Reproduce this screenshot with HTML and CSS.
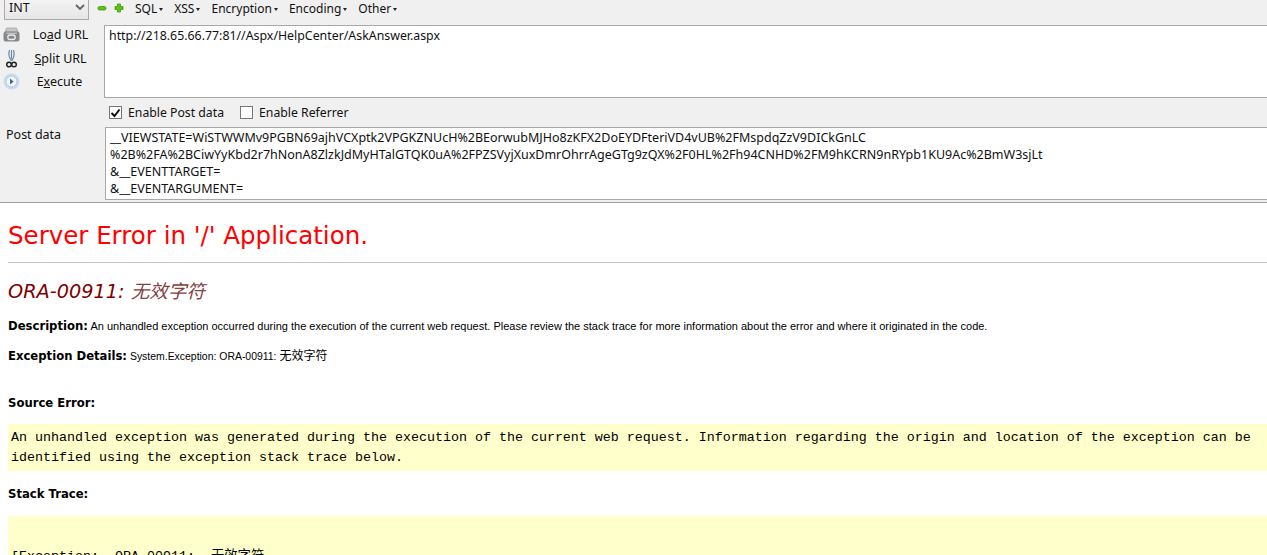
FILE: index.html
```html
<!DOCTYPE html>
<html lang="en">
<head>
<meta charset="utf-8">
<title>Server Error</title>
<link rel="stylesheet" href="styles.css">
</head>
<body>
<section class="bar">
  <div class="toolbar">
    <div class="select"><span>INT</span><svg class="chev" width="10" height="7" viewBox="0 0 10 7"><path d="M1 1l4 4 4-4" fill="none" stroke="#666" stroke-width="1.800"/></svg></div>
    <svg class="pm minus" width="10" height="10" viewBox="0 0 10 10"><rect x="1" y="3.500" width="8" height="3.500" rx="1.500" fill="#62c010" stroke="#3f9a0c" stroke-width=".8"/></svg>
    <svg class="pm" width="10" height="10" viewBox="0 0 10 10"><path d="M3.500 1h3v2.500H9v3H6.500V9h-3V6.500H1v-3h2.500z" fill="#62c010" stroke="#3f9a0c" stroke-width=".8"/></svg>
    <nav class="menu">
      <span class="mi">SQL</span><span class="mi">XSS</span><span class="mi">Encryption</span><span class="mi">Encoding</span><span class="mi">Other</span>
    </nav>
  </div>
  <div class="url-row">
    <div class="actions">
      <div class="action">
        <svg class="ic" width="17" height="15" viewBox="0 0 17 15"><path d="M3.500 1h10l1.500 4H2z" fill="#c4c6c8" stroke="#a0a2a4" stroke-width=".7"/><rect x=".5" y="4.500" width="16" height="10" rx="2.500" fill="#85888b"/><path d="M3 6.200h11" stroke="#d5d7d8"/><rect x="4.800" y="8" width="7.400" height="4.500" rx="2.200" fill="none" stroke="#eceded" stroke-width="1.300"/></svg>
        <span class="label">Lo<u>a</u>d URL</span>
      </div>
      <div class="action">
        <svg class="ic" width="17" height="19" viewBox="0 0 17 19"><path d="M6.500 1C5.500 4 5.500 8 8.500 12M10.500 1c1 3 1 7-2 11M8.500 1v9" fill="none" stroke="#6f8aa8" stroke-width="1.200"/><circle cx="6" cy="15.500" r="2.300" fill="none" stroke="#222" stroke-width="1.500"/><circle cx="11" cy="15.500" r="2.300" fill="none" stroke="#222" stroke-width="1.500"/></svg>
        <span class="label"><u>S</u>plit URL</span>
      </div>
      <div class="action">
        <svg class="ic" width="17" height="17" viewBox="0 0 17 17"><circle cx="8.500" cy="8.500" r="8" fill="#c8dbf0"/><circle cx="8.500" cy="8.500" r="5.400" fill="#f5f8fd" stroke="#9dbde0" stroke-width=".7"/><path d="M7 5.500l3.700 3-3.700 3z" fill="#2f6cb5"/></svg>
        <span class="label lb-exec">E<u>x</u>ecute</span>
      </div>
    </div>
    <div class="box url-box">http://218.65.66.77:81//Aspx/HelpCenter/AskAnswer.aspx</div>
  </div>
  <div class="checks">
    <label class="check"><span class="cb"><svg width="11" height="10" viewBox="0 0 11 10"><path d="M1.500 5l3 3L9.500 1.500" fill="none" stroke="#111" stroke-width="2"/></svg></span>Enable Post data</label>
    <label class="check"><span class="cb"></span>Enable Referrer</label>
  </div>
  <div class="post-row">
    <div class="post-label">Post data</div>
    <div class="box post-box">__VIEWSTATE=WiSTWWMv9PGBN69ajhVCXptk2VPGKZNUcH%2BEorwubMJHo8zKFX2DoEYDFteriVD4vUB%2FMspdqZzV9DICkGnLC<br>%2B%2FA%2BCiwYyKbd2r7hNonA8ZlzkJdMyHTalGTQK0uA%2FPZSVyjXuxDmrOhrrAgeGTg9zQX%2F0HL%2Fh94CNHD%2FM9hKCRN9nRYpb1KU9Ac%2BmW3sjLt<br>&amp;__EVENTTARGET=<br>&amp;__EVENTARGUMENT=</div>
  </div>
</section>
<main class="page">
  <h1>Server Error in '/' Application.</h1>
  <hr>
  <h2>ORA-00911: <span class="cjk">无效字符</span></h2>
  <p class="desc"><b>Description:</b> An unhandled exception occurred during the execution of the current web request. Please review the stack trace for more information about the error and where it originated in the code.</p>
  <p class="details"><b>Exception Details:</b> System.Exception: ORA-00911: <span class="cjk-up">无效字符</span></p>
  <p class="src"><b>Source Error:</b></p>
  <div class="code">An unhandled exception was generated during the execution of the current web request. Information regarding the origin and location of the exception can be identified using the exception stack trace below.</div>
  <p class="stack"><b>Stack Trace:</b></p>
  <div class="code trace">[Exception:  ORA-00911:  <span class="cjk-mono">无效字符</span></div>
</main>
</body>
</html>
```
FILE: styles.css
```css
html, body { margin: 0; padding: 0; height: 555px; overflow: hidden; background: #fff; }
body { font-family: "Liberation Sans", Arial, sans-serif; color: #000; }
.bar { height: 202px; background: #f0f0f0; border-bottom: 1px solid #a0a0a0; font-family: "Noto Sans", "Open Sans", sans-serif; font-size: 12.500px; color: #111; overflow: hidden; }
.toolbar { display: flex; align-items: center; height: 16px; padding: 0 0 4px 4px; }
.select { width: 85px; height: 21px; margin: -1px 0 -4px; border: 1px solid #aaa; border-top: 0; box-sizing: border-box; display: flex; justify-content: space-between; padding: 0 3px 3px 4px; background: linear-gradient(#f4f4f4, #e6e6e6); align-items: center; }
.pm.minus { margin-left: 8px; }
.pm + .pm { margin-left: 7px; }
.menu { display: flex; margin-left: 11px; gap: 11px; font-size: 12px; }
.mi::after { content: ""; display: inline-block; margin-left: 2px; vertical-align: 2px; border: 2px solid transparent; border-top: 3px solid #222; border-bottom: 0; }
.url-row { display: flex; margin-top: 5px; }
.actions { width: 104px; flex: none; margin-top: -2px; }
.action { display: flex; align-items: center; height: 23.500px; padding-left: 3px; }
.ic { flex: none; }
.label { flex: 1; text-align: center; padding-right: 3px; }
.lb-exec { padding-right: 5px; }
.box { background: #fff; border: 1px solid #a8a8a8; border-right: 0; box-sizing: border-box; flex: 1; }
.url-box { height: 73px; padding: 1px 4px; line-height: 17px; font-size: 12.350px; }
.checks { display: flex; height: 29px; align-items: center; padding-left: 109px; gap: 16px; font-size: 12.250px; }
.check { display: flex; align-items: center; gap: 6px; }
.cb { width: 13px; height: 13px; box-sizing: border-box; border: 1px solid #777; background: #fff; display: flex; align-items: center; justify-content: center; }
.post-row { display: flex; }
.post-label { width: 105px; flex: none; margin-top: -1px; padding-left: 6px; box-sizing: border-box; }
.post-box { height: 73px; padding: 1px 4px 0; line-height: 17px; white-space: nowrap; }
.page { padding: 0 0 0 8px; }
h1 { margin: 0; padding-top: 18px; height: 41px; font: 400 24.500px/30px "DejaVu Sans", Verdana, sans-serif; color: #f00; }
hr { margin: 0; border: 0; border-top: 1px solid #c4c4c4; }
h2 { margin: 13px 0 0; font: italic 400 19.300px/28px "DejaVu Sans", Verdana, sans-serif; color: #800000; }
.cjk { font-family: "Noto Sans CJK SC", sans-serif; font-size: 18.600px; color: #864040; }
.cjk-up { font-family: "Noto Sans CJK SC", sans-serif; font-size: 12px; }
.cjk-mono { font-family: "Noto Sans CJK SC", sans-serif; font-size: 13.330px; }
p { margin: 0; font-size: 11px; line-height: 14px; }
b { font-family: "DejaVu Sans", Verdana, sans-serif; font-size: 11.650px; font-weight: 700; }
.desc { margin-top: 13px; }
.details { margin-top: 15px; font-size: 10.450px; }
.src { margin-top: 32px; }
.code { background: #ffffcc; margin-top: 14px; padding: 4px 3px 3px; font: 13.330px/20px "Liberation Mono", "Courier New", monospace; }
.stack { margin-top: 16px; }
.trace { margin-top: 15px; padding-top: 29px; height: 60px; white-space: pre; }
```
